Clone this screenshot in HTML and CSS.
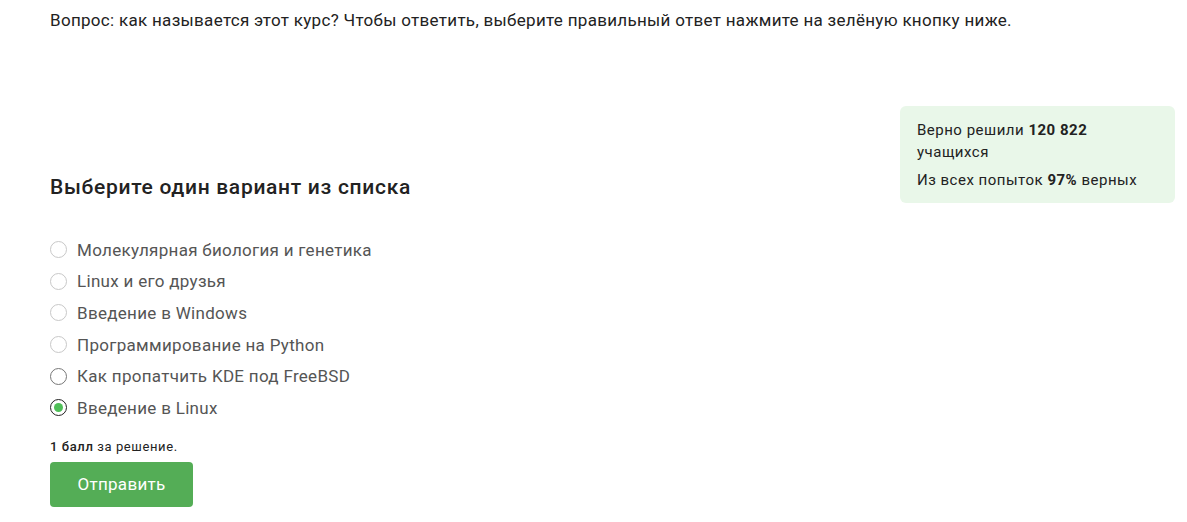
FILE: index.html
```html
<!DOCTYPE html>
<html lang="ru">
<head>
<meta charset="utf-8">
<title>Вопрос</title>
<link rel="stylesheet" href="styles.css">
</head>
<body>
<p class="question">Вопрос: как называется этот курс? Чтобы ответить, выберите правильный ответ нажмите на зелёную кнопку ниже.</p>
<div class="task">
  <div class="main">
    <h2 class="heading">Выберите один вариант из списка</h2>
    <ul class="options">
      <li class="option"><span class="radio"></span><span class="label">Молекулярная биология и генетика</span></li>
      <li class="option"><span class="radio"></span><span class="label">Linux и его друзья</span></li>
      <li class="option"><span class="radio"></span><span class="label">Введение в Windows</span></li>
      <li class="option"><span class="radio"></span><span class="label">Программирование на Python</span></li>
      <li class="option"><span class="radio radio-hover"></span><span class="label">Как пропатчить KDE под FreeBSD</span></li>
      <li class="option"><span class="radio radio-checked"></span><span class="label">Введение в Linux</span></li>
    </ul>
    <p class="score"><span class="score-strong">1 балл</span> за решение.</p>
    <button class="submit">Отправить</button>
  </div>
  <aside class="stats">
    <p class="stats-line">Верно решили <b>120 822</b> учащихся</p>
    <p class="stats-line">Из всех попыток <b>97%</b> верных</p>
  </aside>
</div>
</body>
</html>
```

FILE: styles.css
```css
html, body {
  margin: 0;
  padding: 0;
  background: #fff;
}
body {
  font-family: Roboto, "Noto Sans", "Liberation Sans", sans-serif;
  color: #222;
}
.question {
  margin: 0;
  padding: 10px 0 0 50px;
  font-size: 17px;
  letter-spacing: 0.3px;
  line-height: 20px;
  color: #222;
}
.task {
  display: flex;
  align-items: flex-start;
  padding: 0 12px 0 50px;
  margin-top: 76px;
}
.main {
  flex: 1;
  padding-top: 67px;
}
.heading {
  margin: 0;
  font-size: 21px;
  letter-spacing: 0.7px;
  font-weight: 500;
  line-height: 28px;
  color: #222;
}
.options {
  list-style: none;
  margin: 37px 0 0;
  padding: 0;
}
.option {
  display: flex;
  align-items: center;
  height: 31.6px;
  font-size: 17px;
  letter-spacing: 0.3px;
  color: #555;
}
.option:first-child {
  margin-top: -4px;
}
.radio {
  box-sizing: border-box;
  width: 17px;
  height: 17px;
  border: 1px solid #c8c8c8;
  border-radius: 50%;
  margin-right: 10px;
  flex: none;
  display: flex;
  align-items: center;
  justify-content: center;
}
.radio-hover {
  border-color: #777;
}
.radio-checked {
  border-color: #222;
}
.radio-checked::after {
  content: "";
  width: 9px;
  height: 9px;
  border-radius: 50%;
  background: #4fbf58;
}
.label {
  line-height: 24px;
}
.score {
  margin: 15px 0 0;
  font-size: 13px;
  letter-spacing: 0.6px;
  line-height: 16px;
  color: #222;
}
.score-strong {
  font-weight: 500;
}
.submit {
  margin-top: 7px;
  width: 143px;
  height: 45px;
  border: 0;
  border-radius: 4px;
  background: #54ad56;
  color: #fff;
  font-family: inherit;
  font-size: 17px;
  letter-spacing: 0.3px;
  cursor: pointer;
}
.stats {
  box-sizing: border-box;
  width: 275px;
  padding: 13px 30px 12px 17px;
  border-radius: 6px;
  background: #e9f7e9;
  font-size: 15px;
  letter-spacing: 0.5px;
  line-height: 22px;
  color: #222;
}
.stats-line {
  margin: 0;
}
.stats-line + .stats-line {
  margin-top: 6px;
}
.stats b {
  font-weight: 700;
}
```
